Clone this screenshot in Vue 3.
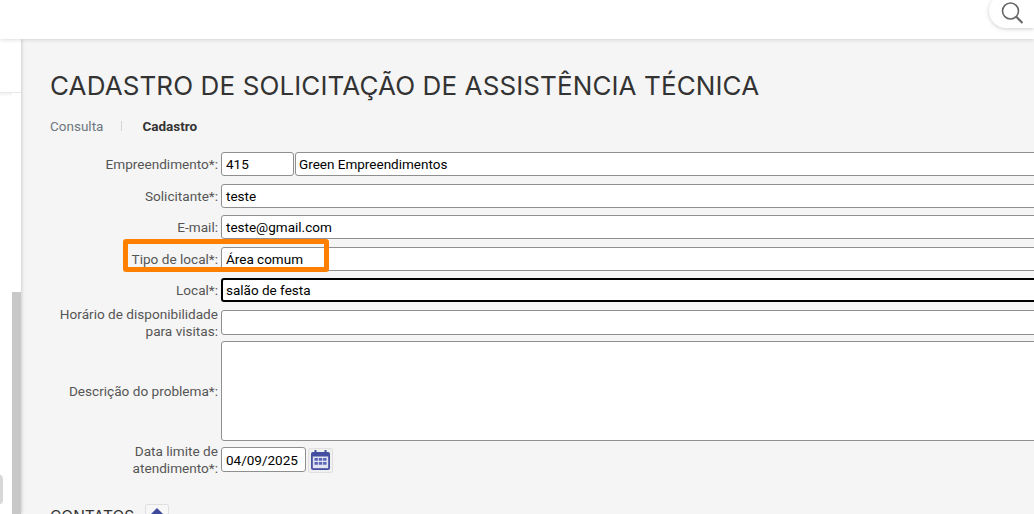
<script setup>
const rows = [
  { label: 'Solicitante*:', value: 'teste' },
  { label: 'E-mail:', value: 'teste@gmail.com' },
  { label: 'Tipo de local*:', value: 'Área comum' },
  { label: 'Local*:', value: 'salão de festa', focus: true },
]
</script>

<template>
  <div class="page">
    <header class="topbar">
      <div class="search">
        <svg width="24" height="24" viewBox="0 0 24 24" fill="none" stroke="#666" stroke-width="1.6">
          <circle cx="10.5" cy="11" r="8" />
          <path d="M16.3 16.8 L22.5 23" stroke-width="2" />
        </svg>
      </div>
    </header>

    <div class="body">
      <aside class="side">
        <div class="side__top"></div>
        <div class="side__fade"></div>
        <div class="side__tab"></div>
        <div class="side__scroll"></div>
      </aside>

      <main class="content">
        <h1 class="title">CADASTRO DE SOLICITAÇÃO DE ASSISTÊNCIA TÉCNICA</h1>

        <nav class="tabs">
          <span class="tab">Consulta</span>
          <span class="tab tab--on">Cadastro</span>
        </nav>

        <form class="form">
          <div class="row">
            <label class="lbl">Empreendimento*:</label>
            <input class="inp inp--code" value="415" />
            <input class="inp inp--grow inp--name" value="Green Empreendimentos" />
          </div>

          <div v-for="r in rows" :key="r.label" class="row">
            <label class="lbl">{{ r.label }}</label>
            <input class="inp inp--grow" :class="{ 'inp--focus': r.focus }" :value="r.value" />
          </div>

          <div class="row row--two row--hours">
            <label class="lbl">Horário de disponibilidade<br />para visitas:</label>
            <input class="inp inp--grow" />
          </div>

          <div class="row row--area">
            <label class="lbl">Descrição do problema*:</label>
            <textarea class="inp inp--grow inp--area"></textarea>
          </div>

          <div class="row row--two">
            <label class="lbl">Data limite de<br />atendimento*:</label>
            <input class="inp inp--date" value="04/09/2025" />
            <button type="button" class="cal">
              <svg width="21" height="21" viewBox="0 0 21 21">
                <rect x="1" y="2" width="19" height="18" rx="2" fill="#454f9f" />
                <rect x="2.8" y="6.5" width="15.4" height="11.7" fill="#e2e4f4" />
                <rect x="4.5" y="0" width="2" height="4" fill="#454f9f" />
                <rect x="14.5" y="0" width="2" height="4" fill="#454f9f" />
                <path d="M4.5 8h3.4v2.8h-3.4zM8.8 8h3.4v2.8h-3.4zM13.1 8h3.4v2.8h-3.4zM4.5 12h3.4v2.8h-3.4zM8.8 12h3.4v2.8h-3.4zM13.1 12h3.4v2.8h-3.4z" fill="#5b65b5" />
              </svg>
            </button>
          </div>
        </form>

        <div class="section">
          <h2 class="section__title">CONTATOS</h2>
          <button type="button" class="toggle">
            <svg width="16" height="16" viewBox="0 0 16 16">
              <path d="M8 0 L14 6 V16 H2 V6 Z" fill="#3f4a9b" />
            </svg>
          </button>
        </div>

        <div class="mark"></div>
      </main>
    </div>
  </div>
</template>

<style>
html, body {
  margin: 0;
  overflow: hidden;
}
</style>

<style scoped>
.page {
  width: 1034px;
  height: 514px;
  overflow: hidden;
  background: #f5f5f5;
  font-family: Roboto, "Liberation Sans", sans-serif;
  display: flex;
  flex-direction: column;
}

.topbar {
  height: 39px;
  flex: none;
  background: #fff;
  box-shadow: 0 1px 4px rgba(0, 0, 0, 0.14);
  position: relative;
  z-index: 2;
  display: flex;
  justify-content: flex-end;
}

.search {
  width: 45px;
  height: 34px;
  margin-top: -6px;
  box-sizing: border-box;
  padding: 6px 0 0 11px;
  background: #fff;
  border-radius: 17px 0 0 17px;
  box-shadow: 0 1px 4px rgba(0, 0, 0, 0.2);
}

.body {
  flex: 1;
  display: flex;
  min-height: 0;
}

.side {
  width: 21px;
  flex: none;
  position: relative;
  background: #fff;
  box-shadow: 1px 0 3px rgba(0, 0, 0, 0.16);
  z-index: 1;
}

.side__top {
  height: 53px;
  border-bottom: 1px solid #e8e8e8;
}

.side__fade {
  width: 12px;
  height: 4px;
  background: linear-gradient(#f2f2f2, #fff);
}

.side__scroll {
  position: absolute;
  left: 12px;
  top: 253px;
  bottom: 0;
  width: 9px;
  background: #c8c8c8;
}

.side__tab {
  position: absolute;
  left: -8px;
  top: 435px;
  width: 11px;
  height: 31px;
  border-radius: 5px;
  background: #d8d8d8;
}

.content {
  flex: 1;
  min-width: 0;
  padding: 30px 0 0 29px;
  position: relative;
}

.title {
  margin: 0;
  font-family: Inter, sans-serif;
  font-size: 26px;
  line-height: 34px;
  letter-spacing: 0.11px;
  font-weight: 400;
  color: #333;
  white-space: nowrap;
}

.tabs {
  display: flex;
  margin-top: 15px;
  font-size: 13.5px;
  line-height: 16px;
}

.tab {
  color: #6c7780;
  padding-right: 19px;
  margin-right: 20px;
  background: linear-gradient(#d5d5d5, #d5d5d5) right 3px / 1px 10px no-repeat;
}

.tab--on {
  color: #333;
  font-weight: 700;
  background: none;
}

.form {
  display: flex;
  flex-direction: column;
  margin-top: 18px;
  width: 1100px;
  gap: 7px;
}

.row {
  display: flex;
  align-items: center;
  gap: 3px;
  height: 24px;
}

/* rows alternate 32/31px in the original */
.row:nth-child(even) {
  margin-top: 1px;
}

.row--two {
  height: 25px;
}

.row--hours {
  margin-bottom: -1px;
}

.row--area {
  height: 100px;
  margin-bottom: -2px;
}

.lbl {
  width: 168px;
  flex: none;
  text-align: right;
  font-size: 13.6px;
  line-height: 17px;
  color: #555;
}

.inp {
  box-sizing: border-box;
  height: 24px;
  border: 1px solid #8f8f8f;
  border-radius: 3px;
  background: #fff;
  padding: 0 4px;
  margin: 0;
  font-family: Roboto, sans-serif;
  font-size: 13.5px;
  color: #000;
  outline: none;
}

.inp--code {
  width: 73px;
}

.inp--grow {
  flex: 1;
  min-width: 0;
}

.inp--name {
  margin-left: -2px;
  padding: 0 3px;
}

.inp--focus {
  border: 2px solid #000;
  padding: 0 3px;
}

.inp--area {
  height: 100px;
  resize: none;
}

.inp--date {
  width: 85px;
  height: 25px;
}

.row--two .inp--grow {
  height: 25px;
}

.cal {
  width: 25px;
  height: 25px;
  flex: none;
  box-sizing: border-box;
  margin: 2px 0 0 -1px;
  padding: 0;
  border: 1px solid #e0e0e0;
  border-radius: 2px;
  background: #f0f0f0;
  display: flex;
  align-items: center;
  justify-content: center;
}

.section {
  display: flex;
  align-items: center;
  gap: 11px;
  margin-top: 32px;
}

.section__title {
  margin: 2px 0 0;
  font-family: Inter, sans-serif;
  font-size: 15.5px;
  line-height: 20px;
  font-weight: 400;
  color: #333;
}

.toggle {
  width: 24px;
  height: 24px;
  box-sizing: border-box;
  padding: 0;
  border: 1px solid #e0e0e0;
  border-radius: 2px;
  background: #f7f7f7;
  display: flex;
  align-items: center;
  justify-content: center;
}

.mark {
  position: absolute;
  left: 102px;
  top: 200px;
  width: 206px;
  height: 33px;
  box-sizing: border-box;
  border: 5px solid #ff8000;
  border-radius: 3px;
}
</style>
